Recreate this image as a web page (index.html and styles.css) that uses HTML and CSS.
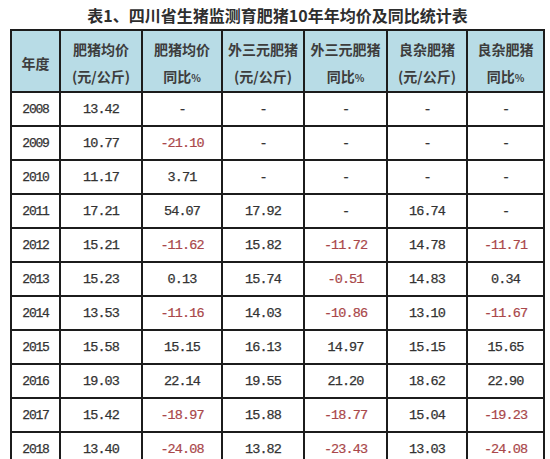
FILE: index.html
```html
<!DOCTYPE html>
<html lang="zh-CN">
<head>
<meta charset="utf-8">
<title>表1</title>
<link rel="stylesheet" href="styles.css">
</head>
<body>
<div class="page">
  <h1 class="title">表1、四川省生猪监测育肥猪10年年均价及同比统计表</h1>
  <table class="stats">
    <colgroup>
      <col class="c-year">
      <col class="c-a">
      <col class="c-b">
      <col class="c-c">
      <col class="c-d">
      <col class="c-e">
      <col class="c-f">
    </colgroup>
    <thead>
      <tr>
        <th>年度</th>
        <th>肥猪均价<br>(元/公斤)</th>
        <th>肥猪均价<br>同比<span class="pct">%</span></th>
        <th>外三元肥猪<br>(元/公斤)</th>
        <th>外三元肥猪<br>同比<span class="pct">%</span></th>
        <th>良杂肥猪<br>(元/公斤)</th>
        <th>良杂肥猪<br>同比<span class="pct">%</span></th>
      </tr>
    </thead>
    <tbody>
      <tr><td>2008</td><td>13.42</td><td>-</td><td>-</td><td>-</td><td>-</td><td>-</td></tr>
      <tr><td>2009</td><td>10.77</td><td class="neg">-21.10</td><td>-</td><td>-</td><td>-</td><td>-</td></tr>
      <tr><td>2010</td><td>11.17</td><td>3.71</td><td>-</td><td>-</td><td>-</td><td>-</td></tr>
      <tr><td>2011</td><td>17.21</td><td>54.07</td><td>17.92</td><td>-</td><td>16.74</td><td>-</td></tr>
      <tr><td>2012</td><td>15.21</td><td class="neg">-11.62</td><td>15.82</td><td class="neg">-11.72</td><td>14.78</td><td class="neg">-11.71</td></tr>
      <tr><td>2013</td><td>15.23</td><td>0.13</td><td>15.74</td><td class="neg">-0.51</td><td>14.83</td><td>0.34</td></tr>
      <tr><td>2014</td><td>13.53</td><td class="neg">-11.16</td><td>14.03</td><td class="neg">-10.86</td><td>13.10</td><td class="neg">-11.67</td></tr>
      <tr><td>2015</td><td>15.58</td><td>15.15</td><td>16.13</td><td>14.97</td><td>15.15</td><td>15.65</td></tr>
      <tr><td>2016</td><td>19.03</td><td>22.14</td><td>19.55</td><td>21.20</td><td>18.62</td><td>22.90</td></tr>
      <tr><td>2017</td><td>15.42</td><td class="neg">-18.97</td><td>15.88</td><td class="neg">-18.77</td><td>15.04</td><td class="neg">-19.23</td></tr>
      <tr><td>2018</td><td>13.40</td><td class="neg">-24.08</td><td>13.82</td><td class="neg">-23.43</td><td>13.03</td><td class="neg">-24.08</td></tr>
    </tbody>
  </table>
</div>
</body>
</html>
```
FILE: styles.css
```css
html, body {
  margin: 0;
  padding: 0;
  background: #ffffff;
}

.page {
  width: 550px;
  height: 459px;
  overflow: hidden;
  padding-left: 10px;
  box-sizing: border-box;
}

.title {
  margin: 0;
  width: 535px;
  height: 29px;
  line-height: 30px;
  text-align: center;
  font-family: "Noto Sans CJK SC", "Liberation Serif", serif;
  font-size: 16px;
  font-weight: 700;
  color: #2e2e2e;
}

.stats {
  border-collapse: collapse;
  table-layout: fixed;
  width: 535px;
  border: 2px solid #1c1c1c;
}

.c-year { width: 49px; }
.c-a { width: 82px; }
.c-b { width: 80px; }
.c-c { width: 82px; }
.c-d { width: 83px; }
.c-e { width: 80px; }
.c-f { width: 77px; }

.stats th,
.stats td {
  border: 2px solid #1c1c1c;
  padding: 0;
  text-align: center;
  vertical-align: middle;
}

.stats th {
  height: 56px;
  background: #b8dce6;
  font-family: "Noto Sans CJK SC", sans-serif;
  font-size: 14px;
  font-weight: 700;
  line-height: 27px;
  color: #3d3d3d;
  padding-top: 4px;
}

.stats th .pct {
  font-size: 10px;
}

.stats td {
  height: 32px;
  font-family: "Liberation Mono", "DejaVu Sans Mono", monospace;
  font-size: 13.5px;
  letter-spacing: -0.9px;
  color: #333333;
  -webkit-text-stroke: 0.25px #333333;
}

.stats td:first-child {
  font-size: 13px;
  letter-spacing: -1.2px;
}

.stats td.neg {
  color: #a9474a;
  -webkit-text-stroke: 0.2px #a9474a;
}
```
